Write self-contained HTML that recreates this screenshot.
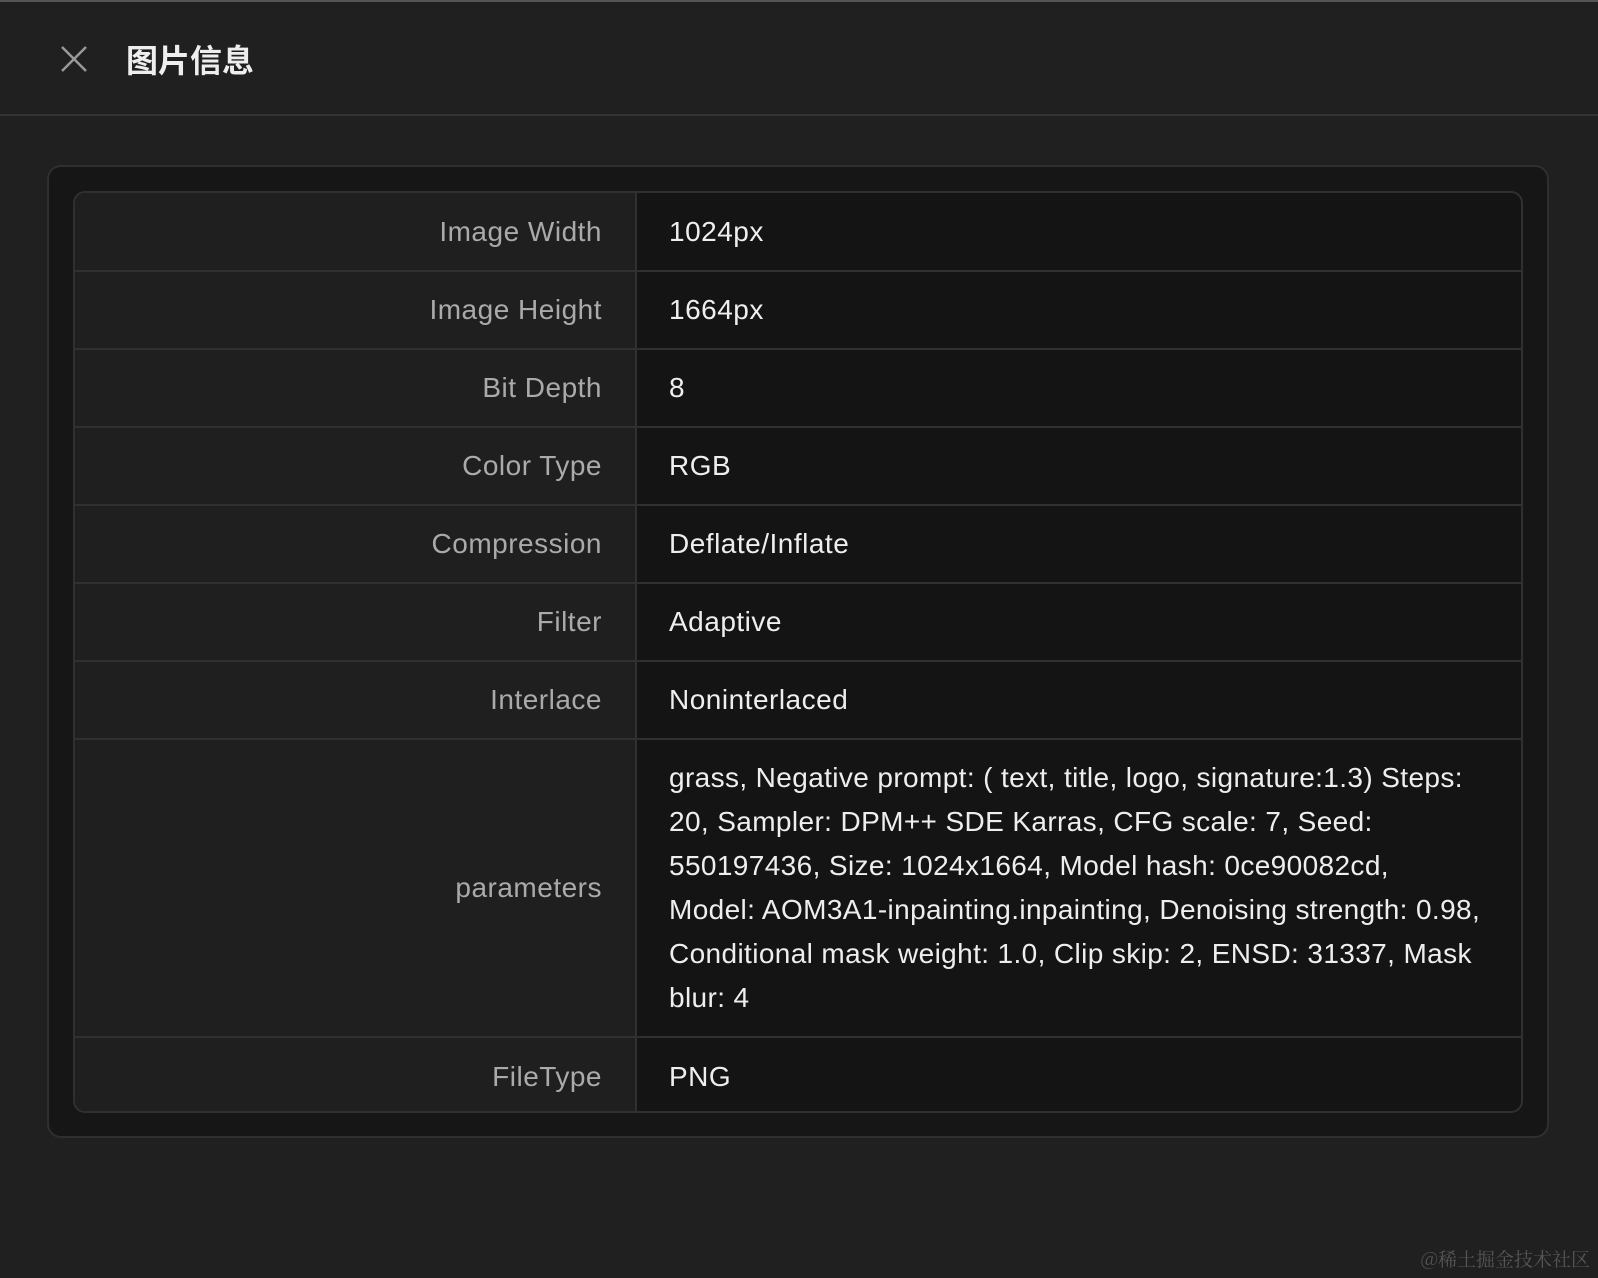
<!DOCTYPE html>
<html><head><meta charset="utf-8"><style>
*{margin:0;padding:0;box-sizing:border-box}
body{width:1598px;height:1278px;background:#202020;font-family:"Liberation Sans","Noto Sans CJK SC",sans-serif;position:relative;overflow:hidden}
.top{position:absolute;left:0;top:0;width:1598px;height:2px;background:#555}
.hdr{position:absolute;left:0;top:114px;width:1598px;height:2px;background:#333}
.x{position:absolute;left:60px;top:45px}
.title{position:absolute;left:126px;top:36px;font-size:32px;font-weight:bold;color:#eee;font-family:"Noto Sans CJK SC",sans-serif}
.outer{position:absolute;left:47px;top:165px;width:1502px;height:973px;background:#161616;border:2px solid #2f2f2f;border-radius:14px}
.inner{position:absolute;left:73px;top:191px;width:1450px;height:922px;border:2px solid #303030;border-radius:12px;overflow:hidden;background:#141414}
table{border-collapse:collapse;width:100%}
td{border-bottom:2px solid #303030;font-size:28px;letter-spacing:0.5px;vertical-align:middle}
tr:last-child td{border-bottom:none}
td.l{width:561px;background:#1f1f1f;color:#aaa;text-align:right;padding-right:33px;border-right:2px solid #303030}
td.v{color:#eee;padding-left:32px;padding-right:40px;line-height:44px}
td.p{letter-spacing:0.38px}
tr{height:78px}
.wm{position:absolute;right:8px;bottom:6px;font-size:19px;color:#555;font-family:"Noto Serif CJK SC",serif}
</style></head><body>
<div class="top"></div>
<svg class="x" width="28" height="28" viewBox="0 0 28 28"><path d="M2 2L26 26M26 2L2 26" stroke="#999" stroke-width="2.5"/></svg>
<div class="title">图片信息</div>
<div class="hdr"></div>
<div class="outer"></div>
<div class="inner"><table>
<tr><td class="l">Image Width</td><td class="v">1024px</td></tr>
<tr><td class="l">Image Height</td><td class="v">1664px</td></tr>
<tr><td class="l">Bit Depth</td><td class="v">8</td></tr>
<tr><td class="l">Color Type</td><td class="v">RGB</td></tr>
<tr><td class="l">Compression</td><td class="v">Deflate/Inflate</td></tr>
<tr><td class="l">Filter</td><td class="v">Adaptive</td></tr>
<tr><td class="l">Interlace</td><td class="v">Noninterlaced</td></tr>
<tr style="height:298px"><td class="l">parameters</td><td class="v p">grass, Negative prompt: ( text, title, logo, signature:1.3) Steps: 20, Sampler: DPM++ SDE Karras, CFG scale: 7, Seed: 550197436, Size: 1024x1664, Model hash: 0ce90082cd, Model: AOM3A1-inpainting.inpainting, Denoising strength: 0.98, Conditional mask weight: 1.0, Clip skip: 2, ENSD: 31337, Mask blur: 4</td></tr>
<tr><td class="l">FileType</td><td class="v">PNG</td></tr>
</table></div>
<div class="wm">@稀土掘金技术社区</div>
</body></html>
